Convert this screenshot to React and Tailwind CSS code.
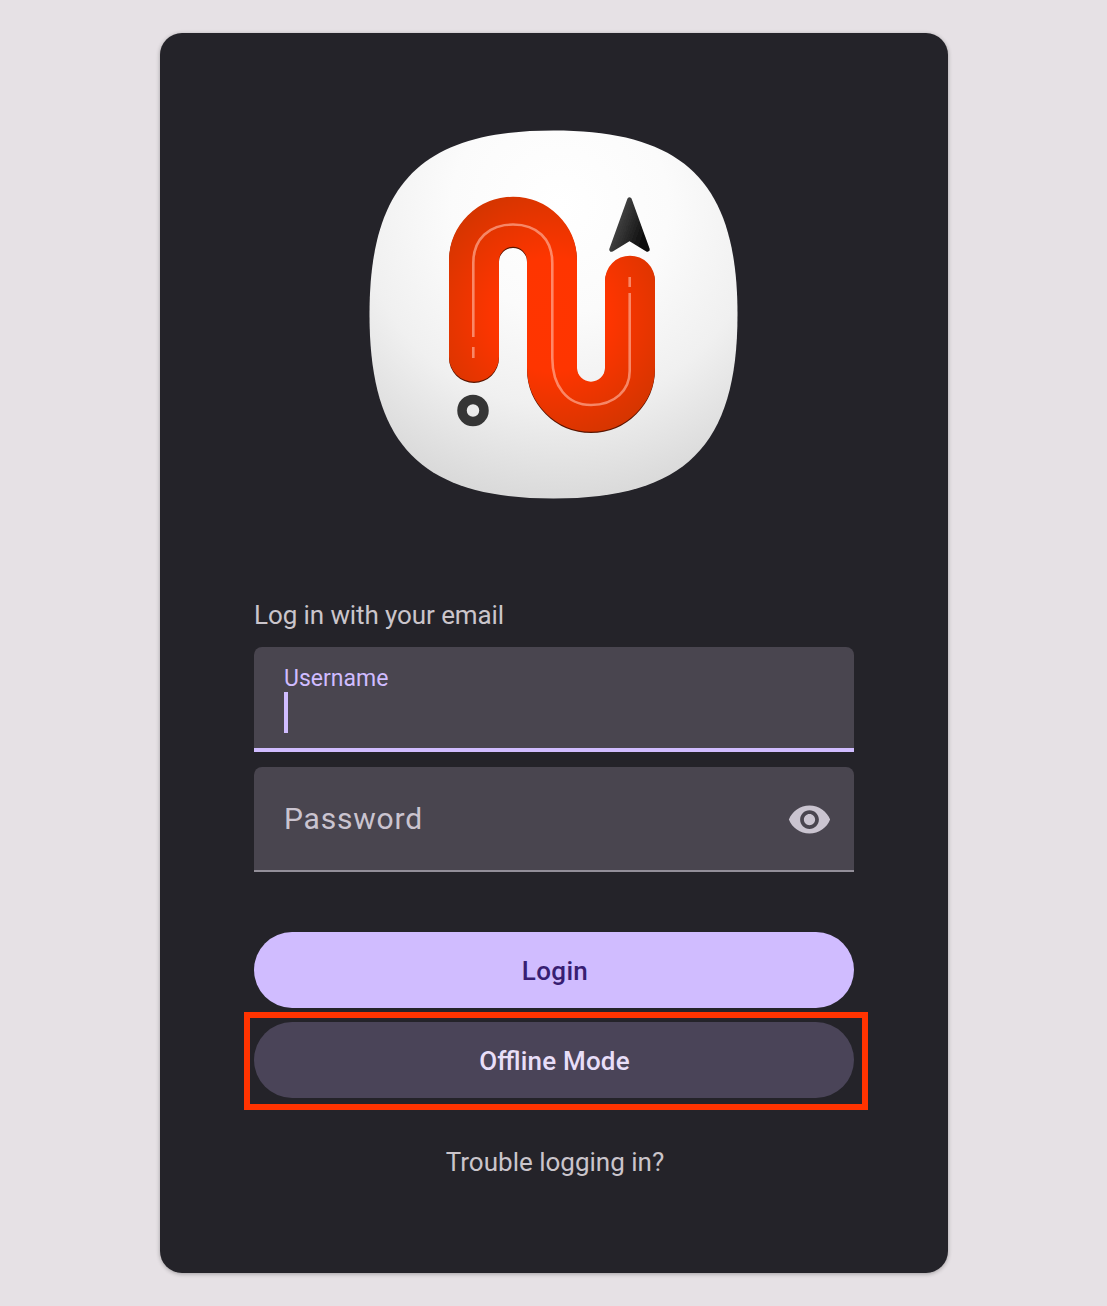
const ROUTE = "M474 357V261A39 39 0 0 1 552 261V368A39 39 0 0 0 630 368V281";

function Logo() {
  return (
    <svg className="block h-[370px] w-[370px]" viewBox="369 130 370 370" fill="none" aria-label="App logo">
      <defs>
        <radialGradient id="tile" gradientUnits="userSpaceOnUse" cx="560" cy="205" r="310">
          <stop offset="0" stopColor="#ffffff" />
          <stop offset="0.35" stopColor="#fbfbfb" />
          <stop offset="0.65" stopColor="#f0f0f0" />
          <stop offset="1" stopColor="#d6d6d6" />
        </radialGradient>
        <radialGradient id="road" gradientUnits="userSpaceOnUse" cx="552" cy="315" r="142">
          <stop offset="0" stopColor="#ff3500" />
          <stop offset="0.4" stopColor="#fe3500" />
          <stop offset="0.9" stopColor="#d63400" />
          <stop offset="1" stopColor="#cf3300" />
        </radialGradient>
        <linearGradient id="arrow" gradientUnits="userSpaceOnUse" x1="612" y1="232" x2="645" y2="244">
          <stop offset="0" stopColor="#444444" />
          <stop offset="1" stopColor="#080808" />
        </linearGradient>
        <filter id="soft" filterUnits="userSpaceOnUse" x="430" y="180" width="245" height="270">
          <feGaussianBlur stdDeviation="0.7" />
        </filter>
      </defs>
      <path
        d="M553.5 130.5C685 130.5 737.5 183 737.5 314.5S685 498.5 553.5 498.5S369.5 446 369.5 314.5S422 130.5 553.5 130.5Z"
        fill="url(#tile)"
      />
      <g filter="url(#soft)">
        <g strokeWidth="50" strokeLinecap="round">
          <path d={ROUTE} stroke="#5a1500" transform="translate(0 1)" />
          <path d={ROUTE} stroke="url(#road)" transform="translate(0 -0.3)" />
        </g>
        <path
          d="M473.3 347V358M473.3 337V263C473.3 239 489 224.5 513 224.5S552.3 239 552.3 263V358C552.3 386 567 405 591 405S629.7 390 629.7 371V293M629.7 287V277"
          stroke="#ffb49c"
          strokeOpacity="0.65"
          strokeWidth="2.6"
        />
        <circle cx="473" cy="410.5" r="11" stroke="#363636" strokeWidth="9.5" />
        <path
          d="M629.5 199.5L647.5 249.5L629.5 238.5L611.5 249.5Z"
          fill="url(#arrow)"
          stroke="url(#arrow)"
          strokeWidth="4.5"
          strokeLinejoin="round"
        />
      </g>
    </svg>
  );
}

function EyeIcon() {
  return (
    <svg className="mt-0.5 h-[45px] w-[45px]" viewBox="0 0 24 24" fill="#cac4d0">
      <path d="M12 4.5C7 4.5 2.73 7.61 1 12c1.73 4.39 6 7.5 11 7.5s9.27-3.11 11-7.5c-1.73-4.39-6-7.5-11-7.5zM12 17c-2.76 0-5-2.24-5-5s2.24-5 5-5 5 2.24 5 5-2.24 5-5 5zm0-8c-1.66 0-3 1.34-3 3s1.34 3 3 3 3-1.34 3-3-1.34-3-3-3z" />
    </svg>
  );
}

export default function App() {
  return (
    <main className="flex h-[1306px] justify-center bg-[#e6e1e5] pt-[33px] pl-px font-['Roboto',sans-serif] text-[#cac5cb]">
      <section className="flex h-[1240px] w-[788px] flex-col items-center rounded-[22px] bg-[#242329] pt-[97px] shadow-[0_1px_4px_rgba(0,0,0,0.3)]">
        <Logo />
        <form className="flex w-[600px] flex-col" onSubmit={(e) => e.preventDefault()}>
          <p className="mt-[95px] h-10 text-[26px] leading-[40px] tracking-[-0.09px]">Log in with your email</p>
          <div className="mt-3 h-[105px] rounded-t-[8px] border-b-4 border-[#d0bcff] bg-[#49454f] px-[30px] pt-[18px] text-[#d0bcff]">
            <div className="h-[27px] text-[23px] leading-[27px]">Username</div>
            <div className="h-[41px] w-1 bg-[#d0bcff]" />
          </div>
          <div className="mt-[15px] flex h-[105px] items-center justify-between rounded-t-[8px] border-b-2 border-[#938f99] bg-[#49454f] pr-[22px] pl-[30px]">
            <span className="text-[30px] tracking-[0.8px] text-[#cac4d0]">Password</span>
            <EyeIcon />
          </div>
          <button className="mt-[60px] h-[76px] rounded-full bg-[#d0bcff] pt-0.5 pl-0.5 text-[26px] font-medium tracking-[0.35px] text-[#381e72]">
            Login
          </button>
          <div className="mt-1 -mr-[14px] -ml-[10px] h-[98px] border-6 border-[#ff3300] pt-1 pr-2 pl-1">
            <button className="h-[76px] w-full rounded-full bg-[#4a4458] pt-0.5 pl-px text-[26px] font-medium tracking-[0.2px] text-[#e8def8] [font-feature-settings:'liga']">
              Offline Mode
            </button>
          </div>
          <a className="mt-8 self-center pl-0.5 text-[26px] leading-[40px]">Trouble logging in?</a>
        </form>
      </section>
    </main>
  );
}
